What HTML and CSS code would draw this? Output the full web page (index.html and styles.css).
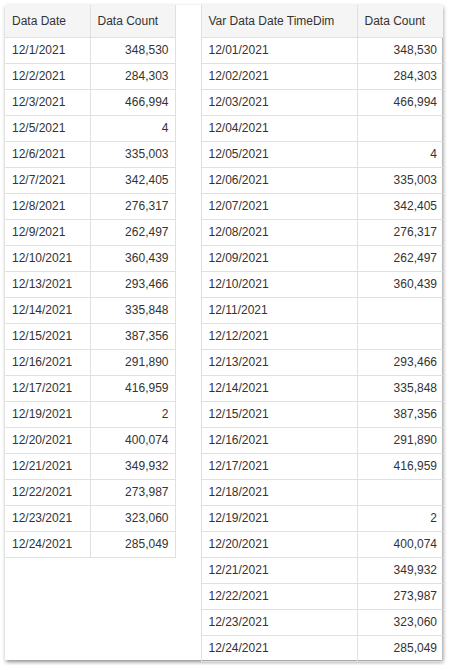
FILE: index.html
```html
<!DOCTYPE html>
<html>
<head>
<meta charset="utf-8">
<link rel="stylesheet" href="styles.css">
</head>
<body>
<div class="panel">
  <table class="grid left">
    <colgroup><col class="c1"><col class="c2"></colgroup>
    <thead><tr><th>Data Date</th><th>Data Count</th></tr></thead>
    <tbody>
      <tr><td>12/1/2021</td><td class="num">348,530</td></tr>
      <tr><td>12/2/2021</td><td class="num">284,303</td></tr>
      <tr><td>12/3/2021</td><td class="num">466,994</td></tr>
      <tr><td>12/5/2021</td><td class="num">4</td></tr>
      <tr><td>12/6/2021</td><td class="num">335,003</td></tr>
      <tr><td>12/7/2021</td><td class="num">342,405</td></tr>
      <tr><td>12/8/2021</td><td class="num">276,317</td></tr>
      <tr><td>12/9/2021</td><td class="num">262,497</td></tr>
      <tr><td>12/10/2021</td><td class="num">360,439</td></tr>
      <tr><td>12/13/2021</td><td class="num">293,466</td></tr>
      <tr><td>12/14/2021</td><td class="num">335,848</td></tr>
      <tr><td>12/15/2021</td><td class="num">387,356</td></tr>
      <tr><td>12/16/2021</td><td class="num">291,890</td></tr>
      <tr><td>12/17/2021</td><td class="num">416,959</td></tr>
      <tr><td>12/19/2021</td><td class="num">2</td></tr>
      <tr><td>12/20/2021</td><td class="num">400,074</td></tr>
      <tr><td>12/21/2021</td><td class="num">349,932</td></tr>
      <tr><td>12/22/2021</td><td class="num">273,987</td></tr>
      <tr><td>12/23/2021</td><td class="num">323,060</td></tr>
      <tr><td>12/24/2021</td><td class="num">285,049</td></tr>
    </tbody>
  </table>
  <table class="grid right">
    <colgroup><col class="c3"><col class="c4"></colgroup>
    <thead><tr><th>Var Data Date TimeDim</th><th>Data Count</th></tr></thead>
    <tbody>
      <tr><td>12/01/2021</td><td class="num">348,530</td></tr>
      <tr><td>12/02/2021</td><td class="num">284,303</td></tr>
      <tr><td>12/03/2021</td><td class="num">466,994</td></tr>
      <tr><td>12/04/2021</td><td class="num"></td></tr>
      <tr><td>12/05/2021</td><td class="num">4</td></tr>
      <tr><td>12/06/2021</td><td class="num">335,003</td></tr>
      <tr><td>12/07/2021</td><td class="num">342,405</td></tr>
      <tr><td>12/08/2021</td><td class="num">276,317</td></tr>
      <tr><td>12/09/2021</td><td class="num">262,497</td></tr>
      <tr><td>12/10/2021</td><td class="num">360,439</td></tr>
      <tr><td>12/11/2021</td><td class="num"></td></tr>
      <tr><td>12/12/2021</td><td class="num"></td></tr>
      <tr><td>12/13/2021</td><td class="num">293,466</td></tr>
      <tr><td>12/14/2021</td><td class="num">335,848</td></tr>
      <tr><td>12/15/2021</td><td class="num">387,356</td></tr>
      <tr><td>12/16/2021</td><td class="num">291,890</td></tr>
      <tr><td>12/17/2021</td><td class="num">416,959</td></tr>
      <tr><td>12/18/2021</td><td class="num"></td></tr>
      <tr><td>12/19/2021</td><td class="num">2</td></tr>
      <tr><td>12/20/2021</td><td class="num">400,074</td></tr>
      <tr><td>12/21/2021</td><td class="num">349,932</td></tr>
      <tr><td>12/22/2021</td><td class="num">273,987</td></tr>
      <tr><td>12/23/2021</td><td class="num">323,060</td></tr>
      <tr><td>12/24/2021</td><td class="num">285,049</td></tr>
    </tbody>
  </table>
</div>
</body>
</html>
```
FILE: styles.css
```css
html, body {
  margin: 0;
  padding: 0;
  background: #ffffff;
}
body {
  padding: 5px;
  font-family: "Liberation Sans", Arial, sans-serif;
  font-size: 12px;
  color: #333333;
}
.panel {
  width: 437px;
  height: 655px;
  display: flex;
  align-items: flex-start;
  gap: 25px;
  background: #ffffff;
  box-shadow: 1px 2px 4px rgba(0, 0, 0, 0.45);
}
.grid {
  border-collapse: collapse;
  table-layout: fixed;
}
.left { width: 170px; }
.right { width: 242px; }
.c1 { width: 85px; }
.c2 { width: 85px; }
.c3 { width: 156px; }
.c4 { width: 86px; }
.grid th,
.grid td {
  height: 26px;
  padding: 0 6px 0 7px;
  border: 1px solid #e0e0e0;
  text-align: left;
  font-weight: normal;
  white-space: nowrap;
  overflow: hidden;
  box-sizing: border-box;
}
.grid th {
  height: 32px;
  background: #f5f5f5;
  border-top: 0;
}
.grid tr > :first-child { border-left: 0; }
.grid tr > :last-child { border-right: 0; }
.grid .num { text-align: right; }
.left td:last-child, .left th:last-child { border-right: 1px solid #e0e0e0; }
.right th:first-child, .right td:first-child { border-left: 1px solid #e0e0e0; }
```
